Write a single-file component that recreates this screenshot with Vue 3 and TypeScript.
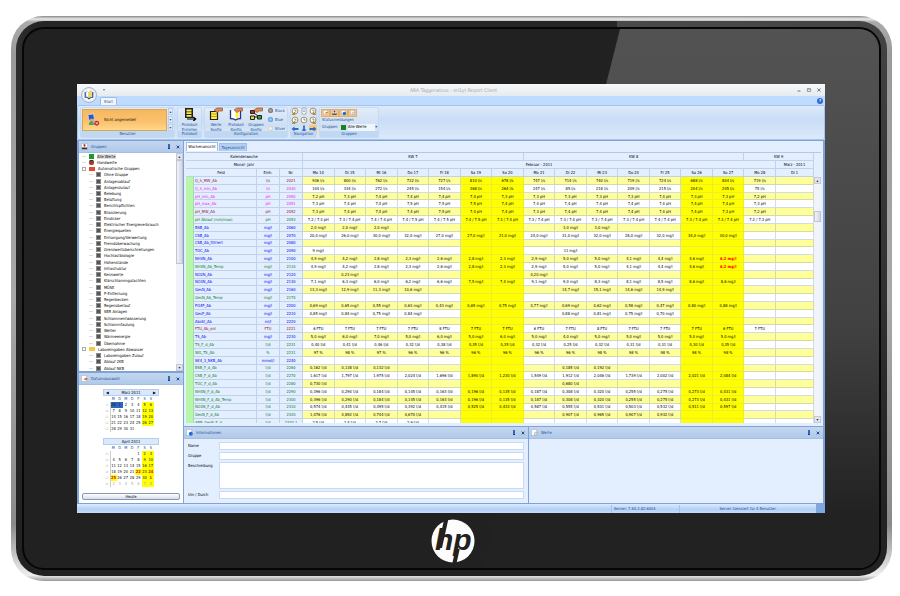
<script setup lang="ts">
import { ref } from 'vue'

type Tone = 'red' | 'pink' | 'green' | 'blue'
interface Row { name: string; unit: string; nr: string; tone: Tone; values: string[] }
interface Node { label: string; level: number; icon: 'all' | 'hand' | 'auto' | 'folder' | 'leaf' }
interface Month { title: string; nav: boolean; weeks: string[][] }

const days = ['Mo 14', 'Di 15', 'Mi 16', 'Do 17', 'Fr 18', 'Sa 19', 'So 20', 'Mo 21', 'Di 22', 'Mi 23', 'Do 24', 'Fr 25', 'Sa 26', 'So 27', 'Mo 28', 'Di 1']
const isWeekend = (i: number): boolean => [5, 6, 12, 13].includes(i)

// Values are listed per day; "-" marks a day without a measurement, "!" a limit violation.
const source: [string, string, string, Tone, string][] = [
  ['Q_h_MW_Ab', 'l/s', '2021', 'red', '936 800 762 732 727 810 678 747 714 740 719 724 688 804 719'],
  ['Q_h_min_Ab', 'l/s', '2030', 'pink', '104 334 272 245 154 368 264 247 85 218 209 215 204 205 75'],
  ['pH_min_Ab', 'pH', '2050', 'pink', '7,2 7,3 7,4 7,4 7,4 7,4 7,3 7,3 7,3 7,3 7,3 7,4 7,3 7,3 7,2'],
  ['pH_max_Ab', 'pH', '2051', 'pink', '7,3 7,4 7,4 7,5 7,5 7,5 7,4 7,4 7,4 7,4 7,4 7,4 7,4 7,4 7,3'],
  ['pH_MW_Ab', 'pH', '2052', 'red', '7,3 7,4 7,4 7,4 7,5 7,4 7,4 7,3 7,4 7,4 7,4 7,4 7,4 7,3 7,2'],
  ['pH Ablauf (min/max)', 'pH', '2053', 'green', '7.2/7.3 7.3/7.4 7.4/7.4 7.4/7.5 7.4/7.5 7.4/7.5 7.3/7.4 7.3/7.4 7.3/7.4 7.3/7.4 7.3/7.4 7.4/7.4 7.3/7.4 7.3/7.4 7.2/7.3'],
  ['BSB_Ab', 'mg/l', '2060', 'blue', '2,0 2,0 2,0 - - - - - 3,0 3,0'],
  ['CSB_Ab', 'mg/l', '2070', 'blue', '20,0 26,0 30,0 32,0 27,0 27,0 21,0 24,0 31,0 32,0 28,0 32,0 34,0 30,0'],
  ['CSB_Ab_filtriert', 'mg/l', '2080', 'blue', ''],
  ['TOC_Ab', 'mg/l', '2090', 'blue', '9 - - - - - - - 11'],
  ['NH4N_Ab', 'mg/l', '2100', 'blue', '4,9 4,2 2,8 2,3 2,6 2,8 2,3 2,9 5,0 5,0 4,1 4,4 4,6 6,2!'],
  ['NH4N_Ab_Temp', 'mg/l', '2110', 'green', '4,9 4,2 2,8 2,3 2,6 2,8 2,3 2,9 5,0 5,0 4,1 4,4 4,6 6,2!'],
  ['NO2N_Ab', 'mg/l', '2120', 'blue', '- 0,23 - - - - - 0,20'],
  ['NO3N_Ab', 'mg/l', '2130', 'blue', '7,1 6,3 6,0 6,2 6,6 7,5 7,4 9,1 9,0 8,3 8,1 8,5 8,6 8,6'],
  ['GesN_Ab', 'mg/l', '2160', 'blue', '13,3 12,9 11,3 10,6 - - - - 14,7 15,1 14,6 14,9'],
  ['GesN_Ab_Temp', 'mg/l', '2170', 'green', ''],
  ['PO4P_Ab', 'mg/l', '2200', 'blue', '0,69 0,65 0,55 0,63 0,43 0,65 0,75 0,77 0,69 0,62 0,58 0,47 0,80 0,88'],
  ['GesP_Ab', 'mg/l', '2210', 'blue', '0,85 0,84 0,75 0,84 - - - - 0,88 0,81 0,75 0,70'],
  ['AbsSt_Ab', 'ml/l', '2220', 'blue', ''],
  ['FTU_Ab_onl', 'FTU', '2221', 'red', '6 7 7 7 8 7 7 6 7 8 7 7 7 6 7'],
  ['TS_Ab', 'mg/l', '2230', 'blue', '5,0 6,0 7,0 5,0 6,0 5,0 6,0 5,0 4,0 5,0 5,0 5,0 5,0 5,0'],
  ['TS_F_d_Ab', 't/d', '2231', 'green', '0,40 0,41 0,46 0,32 0,38 0,35 0,35 0,32 0,25 0,32 0,31 0,31 0,30 0,35'],
  ['WG_TS_Ab', '%', '2231', 'green', '97 98 97 96 96 96 96 96 96 98 98 98 98 98'],
  ['SK4_3_NKB_Ab', 'mmol/l', '2240', 'blue', ''],
  ['BSB_F_d_Ab', 't/d', '2260', 'green', '0,162 0,138 0,132 - - - - - 0,185 0,192'],
  ['CSB_F_d_Ab', 't/d', '2270', 'green', '1,617 1,797 1,975 2,024 1,696 1,890 1,230 1,549 1,912 2,046 1,739 2,002 2,021 2,084'],
  ['TOC_F_d_Ab', 't/d', '2280', 'green', '0,730 - - - - - - - 0,680'],
  ['NH4N_F_d_Ab', 't/d', '2290', 'green', '0,396 0,290 0,184 0,145 0,163 0,196 0,135 0,187 0,308 0,320 0,255 0,275 0,273 0,431'],
  ['NH4N_F_d_Ab_Temp', 't/d', '2300', 'green', '0,396 0,290 0,184 0,145 0,163 0,196 0,135 0,187 0,308 0,320 0,255 0,275 0,273 0,431'],
  ['NO3N_F_d_Ab', 't/d', '2310', 'green', '0,574 0,435 0,395 0,392 0,415 0,525 0,433 0,587 0,555 0,531 0,503 0,532 0,511 0,597'],
  ['GesN_F_d_Ab', 't/d', '2320', 'green', '1,076 0,892 0,744 0,670 - - - - 0,907 0,965 0,907 0,932'],
  ['ABB_GesN_F_d', 't/d', '2320.1', 'green', '2,5 2,4 2,7 2,9'],
]
const rows: Row[] = source.map(([name, unit, nr, tone, list]) => {
  const parts = list.split(' ')
  return { name, unit, nr, tone, values: days.map((_, i) => (parts[i] && parts[i] !== '-' ? parts[i] : '')) }
})
const show = (v: string, unit: string): string => (v ? `${v.replace('!', '').replace('/', ' / ')} ${unit}` : '')

const leaf = (label: string): Node => ({ label, level: 1, icon: 'leaf' })
const tree: Node[] = [
  { label: 'Alle Werte', level: 0, icon: 'all' },
  { label: 'Handwerte', level: 0, icon: 'hand' },
  { label: 'Automatische Gruppen', level: 0, icon: 'auto' },
  ...['Ohne Gruppe', 'Anlagenablauf', 'Anlagenzulauf', 'Belebung', 'Belüftung', 'Berichtspflichten', 'Bilanzierung', 'Eindicker',
    'Elektrischer Energieverbrauch', 'Energiequellen', 'Entsorgung/Verwertung', 'Fremdüberwachung', 'Grenzwertüberschreitungen',
    'Hochlastbiologie', 'Höhenstände', 'Infrastruktur', 'Kennwerte', 'Klärschlammgutachten', 'MÜSE', 'P-Entfernung', 'Regenbecken',
    'Regenüberlauf', 'SBR Anlagen', 'Schlammentwässerung', 'Schlammfaulung', 'Wetter', 'Wärmeenergie', 'Übernahme'].map(leaf),
  { label: 'Laboreingaben Abwasser', level: 0, icon: 'folder' },
  ...['Laboreingaben Zulauf', 'Ablauf 2KB', 'Ablauf NKB'].map(leaf),
]

// Calendar marks: s = selected, h = holiday, r = red day, o = other month
const months: Month[] = [
  { title: 'März 2011', nav: true, weeks: ['9 28s 1s 2 3 4 5 6', '10 7 8 9 10 11 12 13', '11 14 15 16 17 18 19 20', '12 21 22 23 24 25 26 27', '13 28 29 30 31 x x x'].map(w => w.split(' ')) },
  { title: 'April 2011', nav: false, weeks: ['13 x x x x 1 2 3', '14 4 5 6 7 8 9 10', '15 11 12 13 14 15 16 17', '16 18 19 20 21 22h 23 24r', '17 25h 26 27 28 29 30 1r', '18 2o 3o 4o 5o 6o 7o 8o'].map(w => w.split(' ')) },
]
const num = (c: string): string => c.replace(/\D/g, '')
const mark = (c: string, i: number): Record<string, boolean> => ({
  weekend: i > 5 && c !== 'x', selected: c.endsWith('s'), holiday: c.endsWith('h'), redday: c.endsWith('r'), other: c.endsWith('o'),
})

const view = ref<'week' | 'day'>('week')
const group = ref('Alle Werte')
const name = ref('')
const gruppe = ref('')
const text = ref('')
const by = ref('')
</script>

<template>
  <div class="page">
    <div class="device">
      <div class="ring">
        <div class="face">
          <div class="glare"></div>
          <main class="screen">
            <header class="titlebar">
              <button class="orb" aria-label="Menü">
                <svg viewBox="0 0 16 16"><path d="M3 4v7q3 0 5 2 2-2 5-2V4" fill="none" stroke="#234a9a" stroke-width="1.6" /><path d="M4 3q3 0 4 2v7q-1-2-4-2z" fill="#fff" stroke="#8a93a8" stroke-width=".5" /><path d="M8 5q1-2 3-3v8q-2 0-3 2z" fill="#ffe93c" stroke="#a08a20" stroke-width=".5" /></svg>
              </button>
              <span class="quick">▾</span>
              <h1>ARA Täggerwinus - ori1yt Report Client</h1>
              <div class="winbtns">
                <button aria-label="Minimieren"><svg viewBox="0 0 6 6"><path d="M1.5 4h3" stroke="#6b7787" /></svg></button>
                <button aria-label="Maximieren"><svg viewBox="0 0 6 6"><path d="M1.3 1.8h3.4v2.7H1.3zM1.3 2h3.4" fill="none" stroke="#7c8796" stroke-width=".8" /></svg></button>
                <button aria-label="Schliessen"><svg viewBox="0 0 6 6"><path d="M1.3 1.5l3.2 3M4.5 1.5l-3.2 3" stroke="#6b7787" /></svg></button>
              </div>
            </header>
            <nav class="tabstrip">
              <button class="tab">Start</button>
              <button class="help" aria-label="Hilfe">?</button>
            </nav>

            <section class="ribbon">
              <div class="group g-user">
                <div class="body">
                  <button class="user">
                    <svg viewBox="0 0 14 14"><path d="M1 2l6-1 1 6-6 1z" fill="#2a55c8" stroke="#dfe8ff" stroke-width=".7" /><circle cx="5" cy="8" r="2" fill="#d9a578" /><path d="M2 13q0-4 3-4t4 4z" fill="#55a060" /><path d="M7 8h4v4H7z" fill="#b8b8c8" /><circle cx="10.5" cy="11" r="2.6" fill="#d8262c" /><path d="M9.5 10l2 2M11.5 10l-2 2" stroke="#fff" stroke-width=".8" /></svg>
                    <span>Nicht angemeldet</span>
                  </button>
                  <div class="spin"><button aria-label="Hoch">▴</button><button aria-label="Runter">▾</button><button aria-label="Mehr">▾</button></div>
                </div>
                <h2>Benutzer</h2>
              </div>
              <div class="group g-prot">
                <div class="body">
                  <button class="big">
                    <svg viewBox="0 0 14 14"><path d="M2 1h8v10H2z" fill="#222" /><path d="M3.5 2.5h5v2h-5zM3.5 5.2h5V7h-5zM3.5 8h5v1.8h-5z" fill="#ffee44" /><path d="M4 12h8M10.3 10l2.4 2-2.4 2" fill="none" stroke="#000" stroke-width="1.2" /></svg>
                    <span>Protokoll<br />Erstellen</span>
                  </button>
                </div>
                <h2>Protokoll</h2>
              </div>
              <div class="group g-conf">
                <div class="body">
                  <button class="big">
                    <svg viewBox="0 0 14 14"><path d="M1.5 4.5h7v8h-7z" fill="#ffee44" stroke="#222" stroke-width="1.2" /><path d="M2 7h6M2 9.5h6" stroke="#998a20" stroke-width=".7" /><path d="M5 3l3-2h5.5v3H10l-2 1.5z" fill="#d98c5a" stroke="#8f4c22" stroke-width=".6" /></svg>
                    <span>Werte<br />Konfig</span>
                  </button>
                  <button class="big">
                    <svg viewBox="0 0 14 14"><path d="M1.5 3v8.5q3 0 5 1.5 2-1.5 5-1.5V4" fill="#fff" stroke="#27357c" stroke-width="1.3" /><path d="M6.5 5l3-2v7.5l-3 1z" fill="#ffee44" /><path d="M5 3l3-2h5.5v3H10l-2 1.5z" fill="#d98c5a" stroke="#8f4c22" stroke-width=".6" /></svg>
                    <span>Protokoll<br />Konfig</span>
                  </button>
                  <button class="big">
                    <svg viewBox="0 0 14 14"><path d="M4 5l6 5M4 10h6" stroke="#222" stroke-width="1" /><path d="M1.5 3.5h4v3h-4z" fill="#e02020" stroke="#222" /><path d="M1.5 9h4v3.5h-4z" fill="#e8d820" stroke="#222" /><path d="M8.5 8.5h4V12h-4z" fill="#22b022" stroke="#222" /><path d="M5 3l3-2h5.5v3H10l-2 1.5z" fill="#d98c5a" stroke="#8f4c22" stroke-width=".6" /></svg>
                    <span>Gruppen<br />Konfig</span>
                  </button>
                  <div class="skins">
                    <button><i class="black"></i>Black</button>
                    <button><i class="blue"></i>Blue</button>
                    <button><i class="silver"></i>Silver</button>
                  </div>
                </div>
                <h2>Konfiguration</h2>
              </div>
              <div class="group g-nav">
                <div class="body navgrid">
                  <button v-for="n in 9" :key="n" :class="{ hot: n === 9 }" :aria-label="'Navigation ' + n">
                    <svg viewBox="0 0 8 8">
                      <template v-if="n < 7 && n !== 2"><circle cx="4" cy="4" r="2.9" fill="#fffdf0" stroke="#8d7a4d" stroke-width=".8" /><path d="M4 2.5V4h1.5" fill="none" stroke="#444" stroke-width=".6" /><path v-if="n !== 5" :d="n % 3 === 1 ? 'M1 7.5L4 5v2.5z' : 'M7 7.5L4 5v2.5z'" fill="#d49a20" stroke="#7a5a10" stroke-width=".4" /></template>
                      <path v-else-if="n === 2" d="M2 1h4v6H2zM3 3h2M3 4.5h2" fill="#fff" stroke="#8a8f9c" stroke-width=".7" />
                      <path v-else-if="n === 7" d="M.5 4l3-2.5v1.6h4v1.8h-4v1.6z" fill="#2d6cc6" />
                      <path v-else-if="n === 8" d="M4 7.5l-2.5-3h1.6v-4h1.8v4h1.6z" fill="#2d6cc6" />
                      <path v-else d="M7.5 4l-3-2.5v1.6h-4v1.8h4v1.6z" fill="#2d6cc6" />
                    </svg>
                  </button>
                </div>
                <h2>Navigation</h2>
              </div>
              <div class="group g-grp">
                <div class="body stack">
                  <div class="toggles">
                    <button aria-label="Datum"><svg viewBox="0 0 8 8"><path d="M1.5 1.5h5v5h-5z" fill="#fff" stroke="#a9a9b5" stroke-width=".7" /><path d="M3 5l2-2 2 1-2 1z" fill="#dd6a3a" /></svg></button>
                    <button aria-label="Gruppen"><svg viewBox="0 0 8 8"><path d="M1.5 1.5h5v5h-5z" fill="#fff" stroke="#a9a9b5" stroke-width=".7" /><path d="M3 2h2v2H3z" fill="#a02020" /><path d="M1.5 5h5v1.5h-5z" fill="#333" /></svg></button>
                    <button aria-label="Informationen"><svg viewBox="0 0 8 8"><path d="M1.5 1.5h5v5h-5z" fill="#fff" stroke="#a9a9b5" stroke-width=".7" /><circle cx="5" cy="5" r="2" fill="#1f6fd8" /></svg></button>
                    <button aria-label="Werte"><svg viewBox="0 0 8 8"><path d="M1.5 1.5h5v5h-5z" fill="#fff" stroke="#a9a9b5" stroke-width=".7" /><circle cx="5" cy="5" r="1.6" fill="#dfe3ea" stroke="#8a93a5" stroke-width=".5" /></svg></button>
                  </div>
                  <span class="status-lbl">Statusmeldungen</span>
                  <div class="combo">
                    <label for="grp">Gruppen</label>
                    <i></i>
                    <select id="grp" v-model="group"><option>Alle Werte</option></select>
                    <em>▾</em>
                  </div>
                </div>
                <h2>Gruppen</h2>
              </div>
            </section>

            <section class="work">
              <aside class="side">
                <div class="dock tree-dock">
                  <header class="dockhead">
                    <svg viewBox="0 0 8 8"><path d="M.5.5h7v7h-7z" fill="#fff" stroke="#9aa5b8" stroke-width=".6" /><path d="M3 1.5h2V4H3z" fill="#a02020" /><path d="M1 5h6v2H1z" fill="#333" /></svg>
                    <h3>Gruppen</h3><button aria-label="Anheften" class="pin"></button><button aria-label="Schliessen" class="close"><svg viewBox="0 0 6 6"><path d="M1 1l4 4M5 1L1 5" stroke="#15428b" stroke-width="1.4" /></svg></button>
                  </header>
                  <div class="treewrap">
                    <ul>
                      <li v-for="(n, i) in tree" :key="n.label" :class="['l' + n.level, { current: i === 0 }]">
                        <b v-if="n.icon === 'auto' || n.icon === 'folder'" class="minus"></b><s v-else></s>
                        <i :class="n.icon"></i><span>{{ n.label }}</span>
                      </li>
                    </ul>
                    <div class="scroll"><button aria-label="Nach oben">▴</button><div class="track"><div class="thumb tall"></div></div><button aria-label="Nach unten">▾</button></div>
                  </div>
                </div>
                <div class="dock date-dock">
                  <header class="dockhead">
                    <svg viewBox="0 0 8 8"><path d="M.5.5h6v7h-6z" fill="#fff" stroke="#9aa5b8" stroke-width=".6" /><path d="M3 5l2-2 3 1-2 2z" fill="#dd6a3a" /></svg>
                    <h3>Datumsauswahl</h3><button aria-label="Anheften" class="pin"></button><button aria-label="Schliessen" class="close"><svg viewBox="0 0 6 6"><path d="M1 1l4 4M5 1L1 5" stroke="#15428b" stroke-width="1.4" /></svg></button>
                  </header>
                  <div class="cals">
                    <div v-for="m in months" :key="m.title" class="cal">
                      <div class="calhead"><button v-if="m.nav" aria-label="Zurück">◀</button><span>{{ m.title }}</span><button v-if="m.nav" aria-label="Weiter">▶</button></div>
                      <table>
                        <thead><tr><th></th><th v-for="(d, i) in ['M', 'D', 'M', 'D', 'F', 'S', 'S']" :key="i">{{ d }}</th></tr></thead>
                        <tbody>
                          <tr v-for="(w, k) in m.weeks" :key="k"><td v-for="(c, i) in w" :key="i" :class="i ? mark(c, i) : 'wk'">{{ num(c) }}</td></tr>
                        </tbody>
                      </table>
                    </div>
                    <button class="today">Heute</button>
                  </div>
                </div>
              </aside>

              <div class="content">
                <div class="views">
                  <button :class="{ on: view === 'week' }" @click="view = 'week'">Wochenansicht</button>
                  <button :class="{ on: view === 'day' }" @click="view = 'day'">Tagesansicht</button>
                </div>
                <div class="sheet">
                  <table class="grid">
                    <colgroup><col class="c-strip" /><col class="c-name" /><col class="c-unit" /><col class="c-unit" /><col v-for="d in 15" :key="d" /><col class="c-last" /></colgroup>
                    <thead>
                      <tr><th colspan="4">Kalenderwoche</th><th colspan="7">KW 7</th><th colspan="7">KW 8</th><th colspan="2">KW 9</th></tr>
                      <tr><th colspan="4">Monat- Jahr</th><th colspan="15">Februar - 2011</th><th>März - 2011</th></tr>
                      <tr><th colspan="2">Feld</th><th>Einh.</th><th>Nr.</th><th v-for="d in days" :key="d">{{ d }}</th></tr>
                    </thead>
                    <tbody>
                      <tr v-for="r in rows" :key="r.name">
                        <td class="strip"></td>
                        <td :class="['info', 'name', r.tone]">{{ r.name }}</td>
                        <td :class="['info', r.tone]">{{ r.unit }}</td>
                        <td :class="['info', r.tone]">{{ r.nr }}</td>
                        <td v-for="(v, i) in r.values" :key="i" :class="{ we: isWeekend(i), alarm: v.endsWith('!') }">{{ show(v, r.unit) }}</td>
                      </tr>
                    </tbody>
                  </table>
                  <div class="gutter">
                    <div class="scroll"><button aria-label="Nach oben">▴</button><div class="track"><div class="thumb short"></div></div><button aria-label="Nach unten">▾</button></div>
                  </div>
                </div>

                <div class="bottom">
                  <section class="dock">
                    <header class="dockhead">
                      <svg viewBox="0 0 8 8"><path d="M.5.5h6v7h-6z" fill="#fff" stroke="#9aa5b8" stroke-width=".6" /><circle cx="5.5" cy="5.5" r="2.3" fill="#1f6fd8" /></svg>
                      <h3>Informationen</h3><button aria-label="Anheften" class="pin"></button><button aria-label="Schliessen" class="close"><svg viewBox="0 0 6 6"><path d="M1 1l4 4M5 1L1 5" stroke="#15428b" stroke-width="1.4" /></svg></button>
                    </header>
                    <form class="form">
                      <label for="f-name">Name</label><input id="f-name" v-model="name" />
                      <label for="f-group">Gruppe</label><input id="f-group" v-model="gruppe" />
                      <label for="f-text">Beschreibung</label><textarea id="f-text" v-model="text"></textarea>
                      <label for="f-by">Um / Durch</label><input id="f-by" v-model="by" />
                    </form>
                  </section>
                  <section class="dock">
                    <header class="dockhead">
                      <svg viewBox="0 0 8 8"><path d="M.5.5h6v7h-6z" fill="#fff" stroke="#9aa5b8" stroke-width=".6" /><circle cx="5.5" cy="5.5" r="1.8" fill="#dfe3ea" stroke="#8a93a5" stroke-width=".6" /></svg>
                      <h3>Werte</h3><button aria-label="Anheften" class="pin"></button><button aria-label="Schliessen" class="close"><svg viewBox="0 0 6 6"><path d="M1 1l4 4M5 1L1 5" stroke="#15428b" stroke-width="1.4" /></svg></button>
                    </header>
                  </section>
                </div>
              </div>
            </section>

            <footer class="statusbar"><span class="server">Server: 7.84.2.82:6004</span><span class="licence">Server lizensiert für 4 Benutzer.</span><i></i></footer>
          </main>
          <svg class="logo" viewBox="0 0 44 44" role="img" aria-label="hp">
            <circle cx="22" cy="22" r="21.5" fill="#fdfdfd" />
            <path d="M13.2 0h4.2L11 29H6.800zM24.5 30h4.2L25.6 44h-4.2z" fill="#222" />
            <text x="4" y="31">hp</text>
          </svg>
        </div>
      </div>
    </div>
  </div>
</template>

<style>
body { margin: 0; background: #fff; }
</style>

<style scoped>
* { box-sizing: border-box; }
.page { height: 100vh; padding: 16px 8px 15px 11px; display: flex; font: 4px/6px "DejaVu Sans Condensed", "DejaVu Sans", sans-serif; color: #000; }
h1, h2, h3, ul { margin: 0; padding: 0; font: inherit; list-style: none; }
button, input, select, textarea { font: inherit; color: inherit; border: 0; padding: 0; margin: 0; background: none; border-radius: 0; outline: 0; }
button { display: flex; align-items: center; justify-content: center; white-space: nowrap; }
svg { display: block; flex: none; }

.device { flex: 1; display: flex; padding: 5px; border-radius: 32px; background: linear-gradient(to bottom, #888 0, #e8e8e8 3px, #aaa 6px, #9a9a9a 40px, #a8a8a8 50%, #8a8a8a 90%, #eee 99%, #999 100%); }
.ring { flex: 1; display: flex; padding: 6px; border-radius: 28px; background: linear-gradient(to bottom, transparent, #222 90%), linear-gradient(90deg, #2e2e2e, #262626 2%, #262626 69%, #4a4a4a 69%, #444 100%); }
.face { flex: 1; position: relative; display: flex; flex-direction: column; align-items: center; padding: 55px 54px 5px 53px; border: 2px solid #060606; border-radius: 22px; background: #212121; overflow: hidden; }
.glare { position: absolute; inset: 0; background: linear-gradient(to bottom, #525252 0, #505050 12%, #414141 55%, #222 90%); clip-path: polygon(596px 0, 100% 0, 100% 100%, 460px 100%); }
.screen { position: relative; flex: 1; align-self: stretch; min-height: 0; display: flex; flex-direction: column; background: #bfdbff; }
.logo { position: relative; width: 44px; height: 44px; margin: 6px 0 0 4px; }
.logo text { font: italic bold 30px "Liberation Sans", sans-serif; fill: #222; }

.titlebar { height: 12px; display: flex; align-items: center; padding: 0 3px 0 4px; background: linear-gradient(#f7f9fa, #e6ebef); }
.orb { z-index: 1; width: 16px; height: 16px; margin-top: 9px; border-radius: 50%; border: 1px solid #a9b4c6; background: radial-gradient(#fff 40%, #ccd4e2); }
.orb svg { width: 12px; height: 12px; }
.quick { width: 14px; text-align: center; color: #3c6fb6; }
h1 { flex: 1; text-align: center; color: #a3a8ae; font-size: 5px; }
.winbtns { display: flex; gap: 4px; }
.winbtns svg { width: 6px; height: 6px; }
.tabstrip { height: 9px; display: flex; justify-content: space-between; align-items: flex-end; padding: 0 2px 0 23px; background: #bfdbff; }
.tab { width: 17px; height: 8px; border: 1px solid #9cbce8; border-bottom: 0; border-radius: 2px 2px 0 0; background: #f2f7fe; color: #15428b; }
.help { align-self: center; width: 6px; height: 6px; border-radius: 50%; background: #2f68d0; color: #fff; font-weight: bold; }

.ribbon { display: flex; gap: 2px; height: 35px; padding: 1px 2px; border: 1px solid #a6c5ee; border-radius: 2px; background: linear-gradient(#dfeafa, #c9ddf6 40%, #dbe9fb); color: #22529c; }
.group { display: flex; flex-direction: column; border: 1px solid #c6daf3; border-radius: 2px; background: linear-gradient(#e2ecf9, #cfdff3 60%, #dceafa); }
.group h2 { height: 6px; text-align: center; background: #c1d8f2; line-height: 6px; }
.g-user { width: 95px; }
.g-prot { width: 25px; }
.g-conf { width: 84px; }
.g-nav { width: 27px; }
.g-grp { width: 60px; }
.body { flex: 1; min-height: 0; display: flex; align-items: center; padding: 0 1px; }
.user { flex: 1; height: 22px; justify-content: flex-start; gap: 4px; padding-left: 4px; border: 1px solid #d9a556; background: linear-gradient(#f6b85e, #fbc26d 60%, #ffd88c); color: #111; }
.user svg { width: 13px; height: 13px; }
.spin { display: flex; flex-direction: column; gap: 1px; margin-left: 1px; }
.spin button { width: 5px; height: 7px; background: #e2ecfa; border: 1px solid #bcd0ec; }
.big { flex: 1; flex-direction: column; gap: 1px; height: 26px; }
.big svg { width: 14px; height: 14px; }
.big span { line-height: 5px; text-align: center; }
.g-conf .big { flex: none; width: 20px; }
.skins { display: flex; flex-direction: column; gap: 3px; margin-left: 2px; }
.skins button { justify-content: flex-start; gap: 2px; }
.skins i { width: 5px; height: 5px; border-radius: 50%; background: radial-gradient(#bbb, #444); }
.skins .blue { background: radial-gradient(#bdf, #1a78c8); }
.skins .silver { background: radial-gradient(#fff, #c0b8ae); }
.navgrid { display: grid; grid-template-columns: repeat(3, 1fr); gap: 1px; padding: 0; justify-items: center; align-content: center; }
.navgrid svg { width: 8px; height: 8px; }
.navgrid .hot, .toggles button { background: #fcc977; }
.stack { flex-direction: column; align-items: flex-start; justify-content: space-evenly; }
.toggles { display: flex; }
.toggles button { width: 9px; height: 8px; border: 1px solid #e0b070; }
.toggles svg { width: 7px; height: 7px; }
.status-lbl { padding-left: 1px; }
.combo { display: flex; align-items: center; width: 100%; }
.combo label { width: 20px; padding-left: 1px; }
.combo i { width: 5px; height: 5px; margin-right: 2px; background: #1c7f24; }
.combo select { flex: 1; height: 7px; background: #eef5fd; color: #000; appearance: none; }

.work { flex: 1; min-height: 0; display: flex; gap: 1px; padding: 1px 2px 1px 2px; background: #7fa3d6; }
.side { width: 104px; display: flex; flex-direction: column; gap: 2px; }
.dock { display: flex; flex-direction: column; background: #e3efff; }
.dockhead { height: 12px; flex: none; display: flex; align-items: center; gap: 3px; padding: 0 2px; background: linear-gradient(#c3d6ef, #b1cae9); border-bottom: 1px solid #a3bfe4; color: #22529c; }
.dockhead svg { width: 7px; height: 7px; }
.dockhead h3 { flex: 1; }
.dockhead button { width: 6px; height: 6px; color: #15428b; }
.dockhead .close svg { width: 4px; height: 4px; }
.pin::before { content: ""; width: 2px; height: 4px; background: #3a66ad; border-bottom: 1px solid #15428b; }
.tree-dock { flex: 1; min-height: 0; }
.treewrap { flex: 1; min-height: 0; display: flex; background: #fff; }
.treewrap ul { flex: 1; display: flex; flex-direction: column; }
.treewrap li { flex: 1; min-height: 0; display: flex; align-items: center; gap: 3px; padding-left: 3px; white-space: nowrap; line-height: 5px; }
.treewrap li.l1 { padding-left: 10px; }
.treewrap s { width: 4px; height: 1px; background: #ddd; }
.minus { width: 4px; height: 4px; border: 1px solid #a9a9a9; background: #fff; }
.current span { background: #e0e0e0; padding-right: 1px; }
.treewrap i { width: 5px; height: 5px; background: #555; }
i.leaf { border: 1px solid #8b8b8b; }
.treewrap i.all { background: #1d9a28; }
.treewrap i.hand { background: #a33a2a; border-radius: 2px; border-top: 1px solid #222; }
.treewrap i.auto { background: #e24a2c; width: 6px; height: 4px; }
.treewrap i.folder { background: #f6c945; width: 6px; height: 4px; }
.scroll { width: 7px; display: flex; flex-direction: column; background: #f1f3f8; color: #222; }
.scroll button { height: 7px; border: 1px solid #c5cad8; background: #e1e4ee; }
.track { flex: 1; display: flex; flex-direction: column; }
.thumb { border: 1px solid #bfc5d5; background: linear-gradient(90deg, #f2f3f8, #d3d7e3); }
.tall { height: 51%; }
.short { height: 11px; margin-top: 27px; }

.date-dock { height: 130px; }
.cals { flex: 1; display: flex; flex-direction: column; align-items: center; background: #fff; padding-top: 4px; }
.cal { width: 56px; height: 49px; }
.calhead { height: 7px; display: flex; justify-content: center; align-items: center; border: 1px solid #b5cdee; background: #dbe8fa; }
.calhead span { flex: 1; text-align: center; }
.calhead button { width: 7px; }
.cal table { width: 50px; margin-left: 1px; border-collapse: collapse; table-layout: fixed; line-height: 6px; }
.cal th, .cal td { padding: 0; text-align: center; font-weight: normal; color: #111; }
.cal th { color: #22529c; }
.cal .wk { color: #bbb; font-size: 3px; border-right: 1px solid #ccc; }
.cal .weekend { background: #ff0; }
.cal .selected { background: #2f66bd; color: #0c1830; }
.cal .holiday { background: #ff0; color: #e00000; font-weight: bold; }
.cal .redday { color: #e00000; font-weight: bold; }
.cal .other { color: #aaa; }
.today { width: 98px; height: 7px; margin-top: auto; margin-bottom: 3px; border: 1px solid #8797b5; border-radius: 2px; background: linear-gradient(#fff, #d6dcea); }

.content { flex: 1; min-width: 0; display: flex; flex-direction: column; background: #e3efff; }
.views { height: 11px; flex: none; display: flex; align-items: flex-end; gap: 1px; padding: 0 2px 1px; }
.views button { width: 28px; height: 8px; background: #b4cff2; border: 1px solid #9fbfe9; border-bottom: 0; color: #22529c; }
.views .on { width: 32px; height: 9px; background: #fff; color: #000; }
.sheet { flex: 1; min-height: 0; display: flex; align-items: flex-start; margin: 0 2px 3px; overflow: hidden; border-top: 1px solid #b5c9e6; }
.grid { flex: 1; height: 274px; table-layout: fixed; border-collapse: separate; border-spacing: 0; line-height: 5px; background: #fff; }
.c-strip { width: 8px; }
.c-name { width: 63px; }
.c-unit { width: 23px; }
.c-last { width: 38px; }
.grid th, .grid td { padding: 0; font-weight: normal; text-align: center; white-space: nowrap; border-right: 1px solid rgba(140, 165, 210, .4); border-bottom: 1px solid rgba(140, 165, 210, .4); }
.grid th { height: 8px; background: #e3efff; }
.grid tbody tr:nth-child(odd) td { background: #ffff99; }
.grid tbody tr td.we { background: #ff0; border-color: #ecec30; }
.grid tbody tr td.info { background: #e3efff; }
.grid tbody tr td.strip { background: #b6f7a8; border-bottom: 0; }
.grid td.name { text-align: left; padding-left: 1px; }
.grid .red { color: #981028; }
.grid .pink { color: #f010f0; }
.grid .green { color: #087a1c; }
.grid .blue { color: #0000f0; }
.grid .alarm { color: #f00; font-weight: bold; }
.gutter { display: flex; align-self: stretch; padding-top: 24px; background: #e3efff; }

.bottom { flex: none; display: grid; grid-template-columns: 344px 1fr; gap: 1px; height: 77px; padding-top: 1px; background: #7fa3d6; }
.form { display: grid; grid-template-columns: 31px 1fr; grid-template-rows: 8px 8px 27px 8px; row-gap: 2px; padding: 3px 4px 3px 4px; }
.form label { padding-top: 1px; }
.form input, .form textarea { width: 100%; height: 100%; background: #fff; border: 1px solid #c9dbf4; resize: none; }
.statusbar { height: 9px; flex: none; display: flex; align-items: center; color: #22529c; background: linear-gradient(#dcebff, #b4d0f5 60%, #c4dcfa); line-height: 8px; }
.server { width: 68px; margin-left: auto; padding-left: 2px; border-left: 1px solid #a5c2ea; }
.licence { width: 137px; text-align: center; border-left: 1px solid #a5c2ea; }
.statusbar i { width: 9px; height: 9px; background: #7fa8e0; }
</style>
